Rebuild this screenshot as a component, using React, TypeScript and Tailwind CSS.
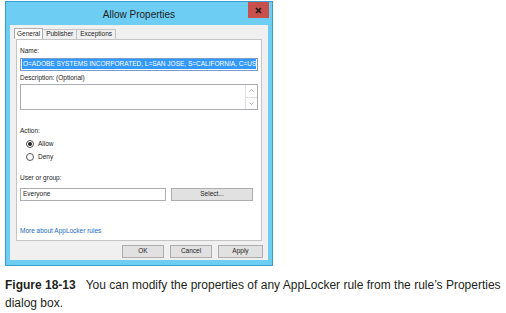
import React from 'react';

const UI_FONT = { fontFamily: '"Liberation Sans", Arial, sans-serif' };

function Radio({ checked, label }: { checked?: boolean; label: string }) {
  return (
    <div className="flex items-center gap-[4px] h-[13px]">
      <span className="w-[8px] h-[8px] rounded-full border border-[#555] bg-white flex items-center justify-center">
        {checked && <span className="w-[4px] h-[4px] rounded-full bg-[#222]" />}
      </span>
      <span>{label}</span>
    </div>
  );
}

function DlgButton({ label, className = '' }: { label: string; className?: string }) {
  return (
    <div
      className={`h-[13px] border border-[#adadad] bg-[#e1e1e1] flex items-center justify-center text-[#222] ${className}`}
    >
      {label}
    </div>
  );
}

export default function App() {
  return (
    <div className="w-[506px] h-[313px] bg-white overflow-hidden" style={UI_FONT}>
      {/* dialog window */}
      <div className="ml-[5px] mt-[1px] w-[268px] h-[265px] border border-[#3a9ccc] bg-[#6dcdf2] flex flex-col">
        <div className="relative h-[23px] flex items-center justify-center">
          <span className="text-[10px] text-[#1e1e1e] mt-[1px]">Allow Properties</span>
          <div className="absolute right-[3px] top-0 w-[21px] h-[16px] bg-[#c8504c] flex items-center justify-center">
            <svg width="7" height="7" viewBox="0 0 7 7">
              <path d="M1 1 L6 6 M6 1 L1 6" stroke="#1a1a1a" strokeWidth="1.6" />
            </svg>
          </div>
        </div>

        <div className="flex-1 mx-[4px] mb-[5px] bg-[#f0f0f0] flex flex-col text-[6.5px] text-[#222] leading-none">
          {/* tabs */}
          <div className="flex items-end pl-[4px] pt-[3px] h-[14px]">
            <div className="h-[11px] px-[2px] border border-b-0 border-[#adadad] bg-white flex items-center">General</div>
            <div className="h-[10px] px-[3px] border border-l-0 border-b-0 border-[#c4c4c4] bg-[#f0f0f0] flex items-center">Publisher</div>
            <div className="h-[10px] px-[3px] border border-l-0 border-b-0 border-[#c4c4c4] bg-[#f0f0f0] flex items-center">Exceptions</div>
          </div>

          <div className="mx-[6px] h-[202px] border border-[#c4c4c4] bg-white px-[3px] flex flex-col">
            <div className="mt-[8px]">Name:</div>
            <div className="mt-[3px] h-[13px] border border-[#7a9ccc] bg-white flex items-center px-[1px]">
              <span className="bg-[#3399ff] text-white px-[1px] py-[2px] whitespace-nowrap overflow-hidden">
                O=ADOBE SYSTEMS INCORPORATED, L=SAN JOSE, S=CALIFORNIA, C=US
              </span>
            </div>

            <div className="mt-[4px]">Description: (Optional)</div>
            <div className="mt-[3px] h-[26px] border border-[#abadb3] bg-white flex justify-end">
              <div className="w-[12px] flex flex-col border-l border-[#e0e0e0]">
                <div className="flex-1 flex items-center justify-center border-b border-[#e0e0e0]">
                  <svg width="5" height="3" viewBox="0 0 5 3">
                    <path d="M0.5 2.5 L2.5 0.5 L4.5 2.5" fill="none" stroke="#999" strokeWidth="0.8" />
                  </svg>
                </div>
                <div className="flex-1 flex items-center justify-center">
                  <svg width="5" height="3" viewBox="0 0 5 3">
                    <path d="M0.5 0.5 L2.5 2.5 L4.5 0.5" fill="none" stroke="#999" strokeWidth="0.8" />
                  </svg>
                </div>
              </div>
            </div>

            <div className="mt-[18px]">Action:</div>
            <div className="mt-[3px] ml-[6px] flex flex-col">
              <Radio checked label="Allow" />
              <Radio label="Deny" />
            </div>

            <div className="mt-[11px]">User or group:</div>
            <div className="mt-[7px] flex gap-[5px]">
              <div className="w-[146px] h-[13px] border border-[#abadb3] bg-white flex items-center px-[2px]">Everyone</div>
              <DlgButton label="Select..." className="w-[82px]" />
            </div>

            <div className="mt-auto mb-[6px] text-[#1b6ac0]">More about AppLocker rules</div>
          </div>

          {/* buttons */}
          <div className="flex justify-end gap-[6px] mr-[5px] mt-[4px]">
            <DlgButton label="OK" className="w-[42px]" />
            <DlgButton label="Cancel" className="w-[42px]" />
            <DlgButton label="Apply" className="w-[45px]" />
          </div>
        </div>
      </div>

      {/* caption */}
      <p className="ml-[5px] mt-[10px] w-[498px] text-[12px] leading-[18px] text-[#231f20]">
        <b>Figure 18-13</b>
        {'\u00a0\u00a0\u00a0'}You can modify the properties of any AppLocker rule from the rule’s Properties dialog box.
      </p>
    </div>
  );
}
